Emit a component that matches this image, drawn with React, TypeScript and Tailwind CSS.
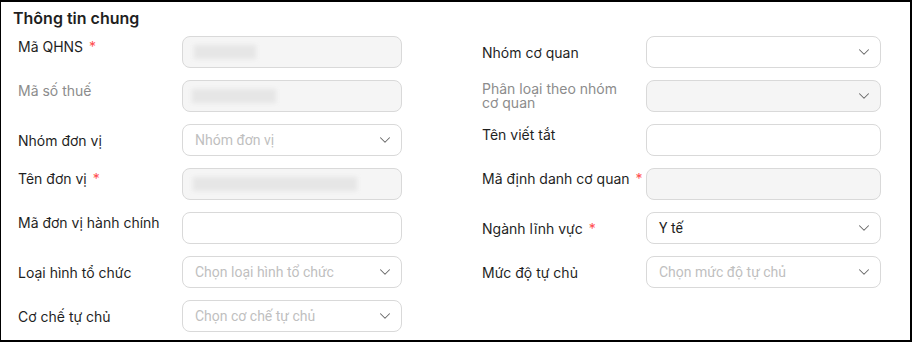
import { ChevronDown } from 'lucide-react';

interface Field {
  label: React.ReactNode;
  required?: boolean;
  mutedLabel?: boolean;
  kind: 'input' | 'select';
  disabled?: boolean;
  value?: string;
  placeholder?: string;
  blurWidth?: number;
  blurOffset?: number;
  twoLine?: boolean;
}

const leftFields: Field[] = [
  { label: 'Mã QHNS', required: true, kind: 'input', disabled: true, blurWidth: 62, blurOffset: 11 },
  { label: 'Mã số thuế', mutedLabel: true, kind: 'input', disabled: true, blurWidth: 84, blurOffset: 9 },
  { label: 'Nhóm đơn vị', kind: 'select', placeholder: 'Nhóm đơn vị' },
  { label: 'Tên đơn vị', required: true, kind: 'input', disabled: true, blurWidth: 164, blurOffset: 10 },
  { label: 'Mã đơn vị hành chính', kind: 'input' },
  { label: 'Loại hình tổ chức', kind: 'select', placeholder: 'Chọn loại hình tổ chức' },
  { label: 'Cơ chế tự chủ', kind: 'select', placeholder: 'Chọn cơ chế tự chủ' },
];

const rightFields: Field[] = [
  { label: 'Nhóm cơ quan', kind: 'select' },
  {
    label: (
      <>
        Phân loại theo nhóm
        <br />
        cơ quan
      </>
    ),
    mutedLabel: true,
    kind: 'select',
    disabled: true,
    twoLine: true,
  },
  { label: 'Tên viết tắt', kind: 'input' },
  { label: 'Mã định danh cơ quan', required: true, kind: 'input', disabled: true },
  { label: 'Ngành lĩnh vực', required: true, kind: 'select', value: 'Y tế' },
  { label: 'Mức độ tự chủ', kind: 'select', placeholder: 'Chọn mức độ tự chủ' },
];

function FormRow({ field, inputWidth }: { field: Field; inputWidth: string }) {
  const isSelect = field.kind === 'select';

  return (
    <div className={`flex h-[32px] ${isSelect ? 'items-center' : 'items-start'}`}>
      <div
        className={`w-[164px] shrink-0 text-[14px] ${field.twoLine ? 'leading-[14px]' : 'leading-[20px] pt-[1px]'} ${
          field.mutedLabel ? 'text-[#8c8c8c]' : 'text-[#1f1f1f]'
        }`}
      >
        {field.label}
        {field.required && <span className="ml-[6px] text-[#ff4d4f]">*</span>}
      </div>
      <div
        className={`${inputWidth} h-[32px] shrink-0 rounded-lg border border-[#d9d9d9] flex items-center justify-between pl-3 pr-[7px] ${
          field.disabled ? 'bg-[#f5f5f5]' : 'bg-white'
        }`}
        style={{ fontFamily: 'Roboto, "Noto Sans", sans-serif' }}
      >
        {field.blurWidth ? (
          <div
            className="h-[14px] bg-[#e6e6e6] blur-[2px]"
            style={{ width: field.blurWidth, marginLeft: field.blurOffset! - 12 }}
          />
        ) : field.value ? (
          <span className="text-[14px] text-[#1f1f1f]">{field.value}</span>
        ) : field.placeholder ? (
          <span className="text-[14px] text-[#bfbfbf]">{field.placeholder}</span>
        ) : (
          <span />
        )}
        {isSelect && <ChevronDown size={18} strokeWidth={1.4} className="text-[#666666]" />}
      </div>
    </div>
  );
}

export default function App() {
  return (
    <div
      className="w-[912px] h-[342px] bg-white border-t-2 border-r-2 border-b-2 border-l border-black overflow-hidden"
      style={{ fontFamily: 'Inter, "Noto Sans", sans-serif' }}
    >
      <h2 className="pl-[12px] pt-[6px] h-[34px] text-[16px] leading-[20px] font-semibold text-[#1f1f1f]">
        Thông tin chung
      </h2>
      <div className="flex">
        <div className="w-[464px] pl-[17px] flex flex-col gap-3">
          {leftFields.map((field, i) => (
            <FormRow key={i} field={field} inputWidth="w-[220px]" />
          ))}
        </div>
        <div className="flex flex-col gap-3 pl-[17px]">
          {rightFields.map((field, i) => (
            <FormRow key={i} field={field} inputWidth="w-[235px]" />
          ))}
        </div>
      </div>
    </div>
  );
}
